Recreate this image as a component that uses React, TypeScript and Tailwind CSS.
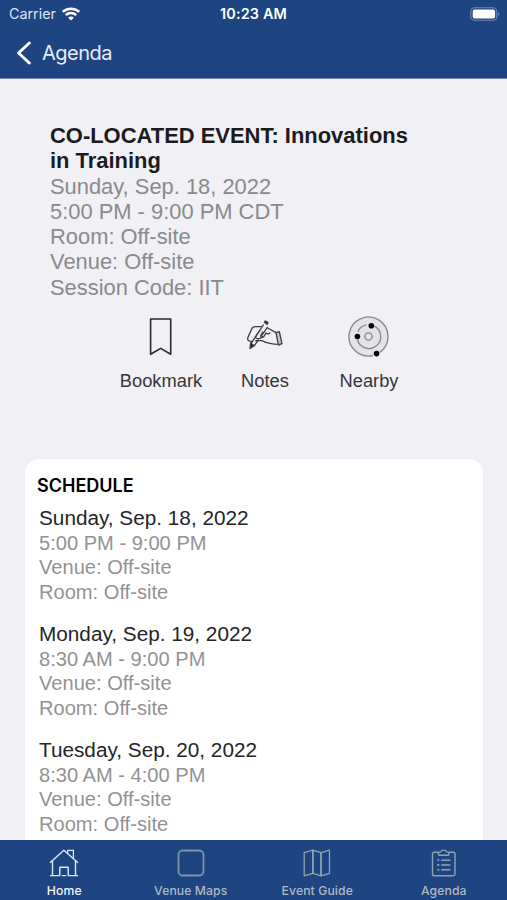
import type { ReactNode } from "react";

const schedule = [
  { date: "Sunday, Sep. 18, 2022", time: "5:00 PM - 9:00 PM" },
  { date: "Monday, Sep. 19, 2022", time: "8:30 AM - 9:00 PM" },
  { date: "Tuesday, Sep. 20, 2022", time: "8:30 AM - 4:00 PM" },
];

function WifiIcon() {
  return (
    <svg width="18" height="14" viewBox="0 0 18 14" fill="none" stroke="#fff" strokeWidth="2.5">
      <path d="M.8 4.8C5.6.6 12.4.6 17.2 4.8" />
      <path d="M3.8 8.1c2.9-2.7 7.5-2.7 10.4 0" />
      <path d="M9 13.6 6.1 10.7c1.6-1.5 4.2-1.5 5.8 0L9 13.6Z" fill="#fff" stroke="none" />
    </svg>
  );
}

function BatteryIcon() {
  return (
    <svg width="30" height="14" viewBox="0 0 30 14" fill="none">
      <rect x="0.8" y="0.7" width="26" height="12.6" rx="3.8" stroke="#7189b3" strokeWidth="1.1" />
      <rect x="2.7" y="2.6" width="22.4" height="9" rx="1.8" fill="#fff" />
      <path d="M28.2 5c1.5.7 1.5 3.3 0 4V5Z" fill="#7189b3" />
    </svg>
  );
}

function BookmarkIcon() {
  return (
    <svg width="24" height="40" viewBox="0 0 24 40" fill="none" stroke="#29292b" strokeWidth="1.6" strokeLinejoin="round">
      <path d="M1.6 2h20.1v35.3L11.7 31.4 1.6 37.3V2Z" />
    </svg>
  );
}

function NotesIcon() {
  return (
    <svg width="36" height="30" viewBox="18 30 108 90" fill="none" stroke="#3f3f42" strokeWidth="4" strokeLinejoin="round" strokeLinecap="round">
      <path d="m67 45-37 56M79 52 62 77M52 90l-12 17" />
      <path d="m29 99-2 16 13-8-11-8ZM70 37l3-4 8 5-3 5-8-6Z" fill="#19191b" />
      <path d="M61 50H43c-6 0-9 2-11 7L21 82c-3 7 1 12 8 12h3" />
      <path d="M56 63c-6 4-9 11-13 20M80 54l25 14M65 66l-5 9c-3 7 5 10 9 4l6-10c3 3 8 3 11 0" />
      <path d="M46 85c8 2 14 0 19-5M44 92h19c13 7 26 10 45 11" />
      <path d="m105 68 10-3 8 36-11 4-7-37Z" fill="#c4c4c8" />
    </svg>
  );
}

function NearbyIcon() {
  return (
    <svg width="42" height="42" viewBox="0 0 42 42" fill="none" stroke="#8a8a8d" strokeWidth="1.4">
      <circle cx="20.5" cy="20.5" r="19.5" fill="#e4e4e7" stroke="none" />
      <path d="M31.8 36.4A19.5 19.5 0 1 0 25 39.5" />
      <path d="M26.3 10.2a11.8 11.8 0 1 1-16.9 13.1M9.9 15.6a11.8 11.8 0 0 1 8.6-6.7" />
      <circle cx="20.5" cy="20.5" r="3.6" />
      <g fill="#050507" stroke="none">
        <circle cx="23.3" cy="9.7" r="2.8" />
        <circle cx="9.4" cy="20.5" r="2.8" />
        <circle cx="28.6" cy="37.6" r="2.8" />
      </g>
    </svg>
  );
}

function HomeIcon() {
  return (
    <svg width="30" height="28" viewBox="0 0 30 28" fill="none" stroke="#dfe9f7" strokeWidth="1.4" strokeLinejoin="round">
      <path d="M1 13.8 14.9 1.2 29 13.8M3.5 11.6v14.8M26.5 11.6v14.8M1 26.6h9.8V18.2h8.4v8.4H29" />
      <path d="M18.6 4.5V1.4h5.8v8.2M12.8 26.6h4.4" strokeWidth="1.2" />
    </svg>
  );
}

function SquareIcon() {
  return (
    <svg width="28" height="28" viewBox="0 0 28 28" fill="none">
      <rect x="1.5" y="1.5" width="25" height="25" rx="4.3" stroke="#8393a5" strokeWidth="1.8" />
    </svg>
  );
}

function MapIcon() {
  return (
    <svg width="28" height="28" viewBox="0 0 28 28" fill="none" stroke="#93a2b2" strokeWidth="1.3" strokeLinejoin="round">
      <path d="M1.2 3.6 9.9 1.1 18 3.6l8.5-2.5v23.2L18 26.9l-8.1-2.6-8.7 2.6V3.6Z" />
      <path d="M9.9 1.1v23.2M18 3.6v23.3" strokeWidth="1.8" />
    </svg>
  );
}

function ClipboardIcon() {
  return (
    <svg width="26" height="28" viewBox="0 0 26 28" fill="none" stroke="#93a2b2" strokeWidth="1.4" strokeLinejoin="round">
      <path d="M7.5 3.2H3.3A1.8 1.8 0 0 0 1.5 5v20a1.8 1.8 0 0 0 1.8 1.8h18.9A1.8 1.8 0 0 0 24 25V5a1.8 1.8 0 0 0-1.8-1.8h-4.3" />
      <path d="M7.5 5.3V3.4l2.1-.5c.8-2.4 5.3-2.4 6.2 0l2.1.5v1.9c0 .6-.4 1-1 1H8.5c-.6 0-1-.4-1-1Z" />
      <path d="M10.2 11.2h9.2M10.2 16h9.2M10.2 20.8h9.2" />
      <path d="M6.3 11.2h2M6.3 16h2M6.3 20.8h2" strokeWidth="1.8" />
    </svg>
  );
}

function Tab({ icon, label, active = false }: { icon: ReactNode; label: string; active?: boolean }) {
  return (
    <button className="flex flex-1 flex-col items-center pt-[9px]">
      <span className="flex h-7 items-center">{icon}</span>
      <span
        className={`mt-[6px] whitespace-nowrap text-[12.2px] leading-4 font-medium tracking-[0.1px] ${active ? "text-[#f1f5fc]" : "text-[#b0b9c1]"}`}
      >
        {label}
      </span>
    </button>
  );
}

export default function App() {
  return (
    <div className="flex h-[900px] w-[507px] flex-col overflow-hidden bg-[#f0f0f5] font-['Liberation_Sans',Arial,sans-serif]">
      <header className="h-[79px] shrink-0 border-b border-[#6f86b5] bg-[#1e4482] font-['Inter',sans-serif] text-white">
        <div className="grid h-[28px] grid-cols-3 items-center pl-[9px] pr-[7px]">
          <div className="flex items-center gap-[6px] text-[14.3px] text-[#dce5f3]">
            <span>Carrier</span>
            <WifiIcon />
          </div>
          <div className="pr-[2px] text-center text-[14.4px] font-semibold tracking-[0.15px]">10:23 AM</div>
          <div className="flex justify-end">
            <BatteryIcon />
          </div>
        </div>
        <div className="flex h-[49px] items-center pl-4">
          <svg width="16" height="24" viewBox="0 0 16 24" fill="none" stroke="#fff" strokeWidth="2.9" strokeLinecap="round" strokeLinejoin="round">
            <path d="M13.3 2 2.6 12l10.7 10" />
          </svg>
          <span className="ml-[10px] text-[20px] tracking-[-0.5px] text-[#e7eef9]">Agenda</span>
        </div>
      </header>

      <main className="min-h-0 flex-1 overflow-hidden">
        <section className="pl-[50px] pt-[44px] text-[21.9px] leading-[25.3px] text-[#8a8a8d]">
          <h1 className="text-[21.95px] font-bold text-[#1c1c1e]">
            CO-LOCATED EVENT: Innovations
            <br />
            in Training
          </h1>
          <p>Sunday, Sep. 18, 2022</p>
          <p>5:00 PM - 9:00 PM CDT</p>
          <p>Room: Off-site</p>
          <p>Venue: Off-site</p>
          <p>Session Code: IIT</p>
        </section>

        <div className="mt-[16px] ml-[109px] flex text-[18.3px] leading-6 text-[#363638]">
          <button className="flex w-[104px] flex-col items-center">
            <span className="flex h-[42px] items-center"><BookmarkIcon /></span>
            <span className="mt-[11px]">Bookmark</span>
          </button>
          <button className="flex w-[104px] flex-col items-center">
            <span className="flex h-[42px] items-center pb-[4px]"><NotesIcon /></span>
            <span className="mt-[11px]">Notes</span>
          </button>
          <button className="flex w-[104px] flex-col items-center">
            <span className="flex h-[42px] items-center"><NearbyIcon /></span>
            <span className="mt-[11px]">Nearby</span>
          </button>
        </div>

        <section className="mt-[66px] ml-[25px] h-[420px] w-[458px] rounded-t-[14px] bg-white pt-[15px]">
          <h2 className="pl-3 font-['Inter',sans-serif] text-[18px] leading-6 font-semibold text-black">SCHEDULE</h2>
          <div className="mt-[8px] flex flex-col gap-[18px] pl-[14px] text-[20.1px] leading-[24.5px] text-[#929294]">
            {schedule.map((item) => (
              <div key={item.date}>
                <h3 className="text-[20.75px] text-[#252527]">{item.date}</h3>
                <p>{item.time}</p>
                <p>Venue: Off-site</p>
                <p>Room: Off-site</p>
              </div>
            ))}
          </div>
        </section>
      </main>

      <nav className="flex h-[60px] shrink-0 bg-[#1e4482] pl-px font-['Inter',sans-serif]">
        <Tab icon={<HomeIcon />} label="Home" active />
        <Tab icon={<SquareIcon />} label="Venue Maps" />
        <Tab icon={<MapIcon />} label="Event Guide" />
        <Tab icon={<ClipboardIcon />} label="Agenda" />
      </nav>
    </div>
  );
}
